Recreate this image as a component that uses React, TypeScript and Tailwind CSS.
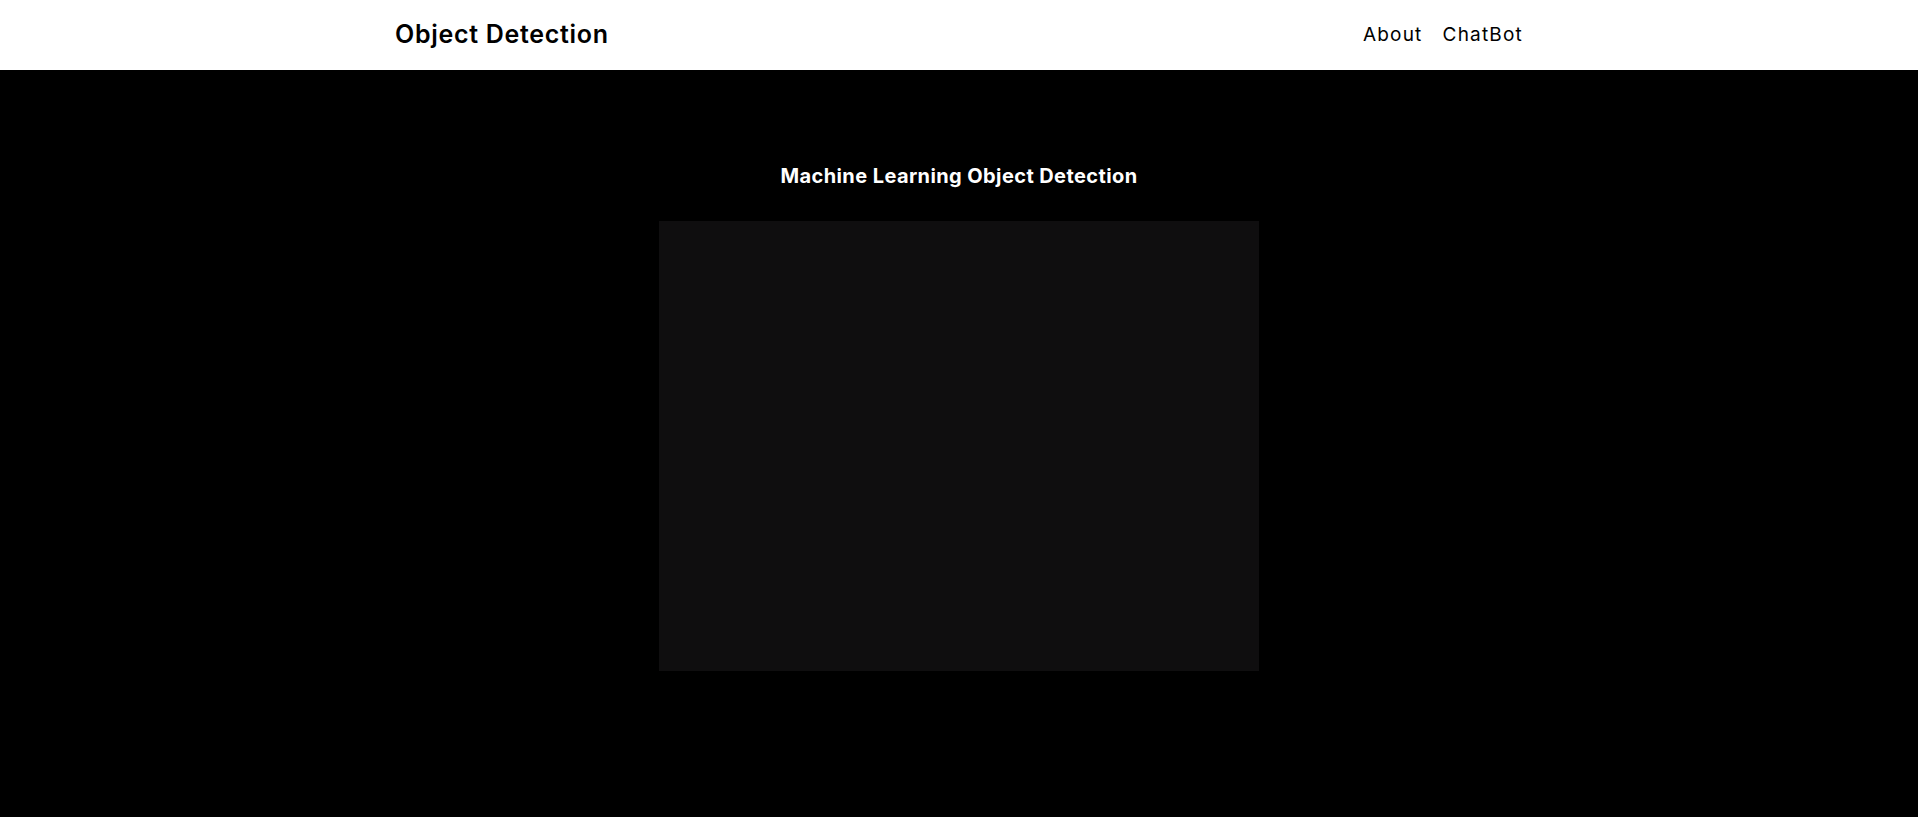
import React from "react";

export default function App() {
  return (
    <div className="min-h-[817px] bg-black" style={{ fontFamily: "Inter, 'Noto Sans', sans-serif" }}>
      <header className="h-[70px] bg-white">
        <div className="mx-auto flex h-full w-[1128px] items-center justify-between">
          <div className="text-[25px] font-semibold text-black tracking-[0.7px]">Object Detection</div>
          <nav className="flex items-center gap-[20px] text-[19px] text-black tracking-[1.2px]">
            <a>About</a>
            <a>ChatBot</a>
          </nav>
        </div>
      </header>
      <main className="flex flex-col items-center pt-[91px]">
        <h1 className="text-[20px] font-bold text-white leading-[30px] tracking-[0.4px]">Machine Learning Object Detection</h1>
        <div className="mt-[30px] h-[450px] w-[600px] bg-[#0f0e0f]" />
      </main>
    </div>
  );
}
